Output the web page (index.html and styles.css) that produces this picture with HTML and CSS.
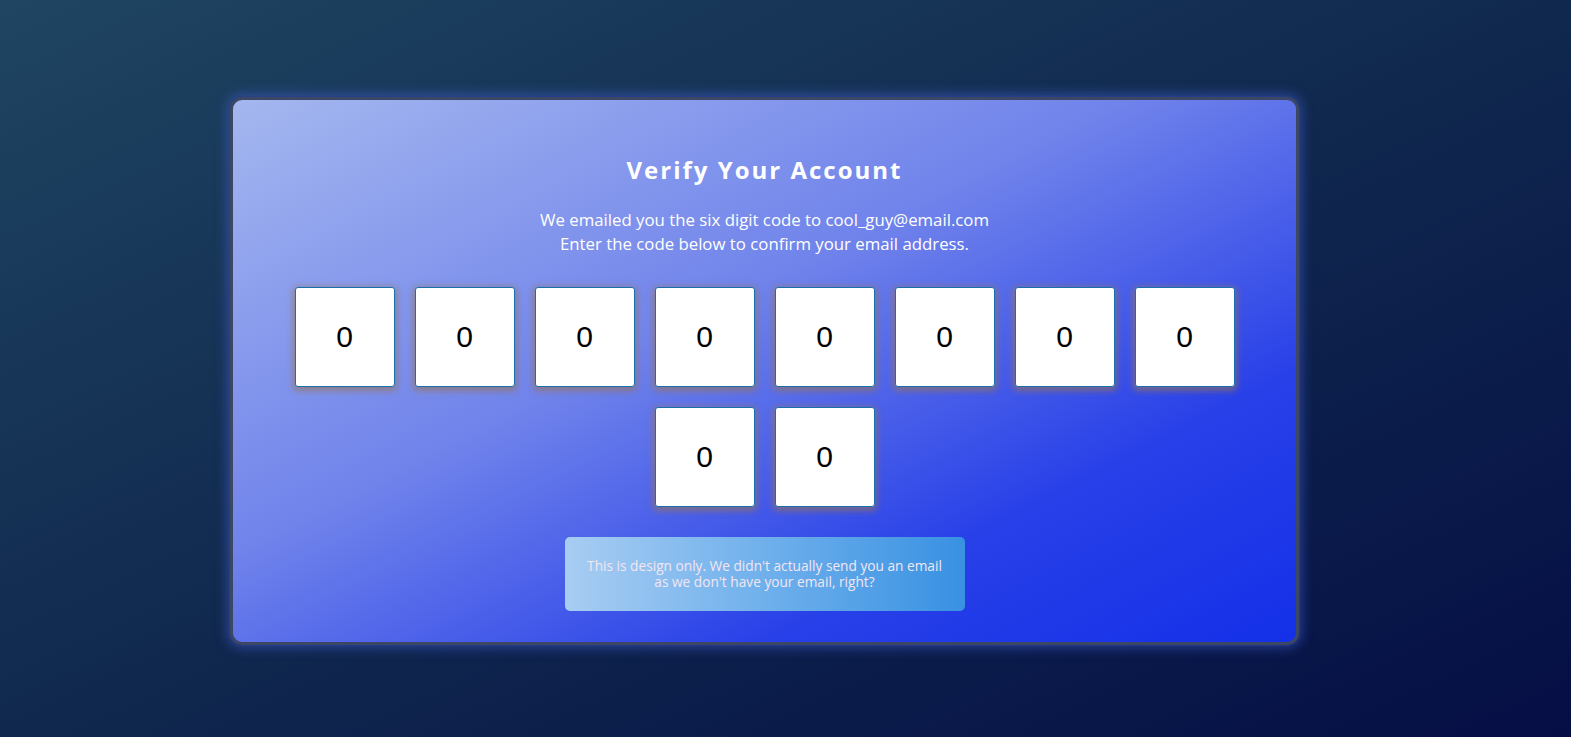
FILE: index.html
```html
<!DOCTYPE html>
<html lang="en">
<head>
<meta charset="utf-8">
<title>Verify Your Account</title>
<link rel="stylesheet" href="styles.css">
</head>
<body>
<div class="page">
  <div class="card">
    <h1 class="title">Verify Your Account</h1>
    <p class="subtitle">We emailed you the six digit code to cool_guy@email.com<br>Enter the code below to confirm your email address.</p>
    <div class="codes">
      <input class="digit" type="text" value="0" maxlength="1">
      <input class="digit" type="text" value="0" maxlength="1">
      <input class="digit" type="text" value="0" maxlength="1">
      <input class="digit" type="text" value="0" maxlength="1">
      <input class="digit" type="text" value="0" maxlength="1">
      <input class="digit" type="text" value="0" maxlength="1">
      <input class="digit" type="text" value="0" maxlength="1">
      <input class="digit" type="text" value="0" maxlength="1">
      <input class="digit" type="text" value="0" maxlength="1">
      <input class="digit" type="text" value="0" maxlength="1">
    </div>
    <div class="note">This is design only. We didn't actually send you an email<br>as we don't have your email, right?</div>
  </div>
</div>
</body>
</html>
```

FILE: styles.css
```css
html, body {
  margin: 0;
  padding: 0;
  height: 100%;
}
body {
  background: linear-gradient(to bottom right, #1f4562 0%, #10284e 50%, #050e45 100%);
  font-family: "Open Sans", "Noto Sans", sans-serif;
  overflow: hidden;
}
.page {
  padding: 97px 0 0 230px;
}
.card {
  box-sizing: border-box;
  width: 1069px;
  height: 548px;
  border: 3px solid #3b4765;
  border-radius: 12px;
  background: linear-gradient(to bottom right, #a4b7ef 0%, #7083eb 42%, #2840e8 75%, #1430e8 100%);
  box-shadow: 0 0 0 1px rgba(40, 60, 140, 0.6), 0 0 12px 3px rgba(70, 100, 220, 0.5);
  display: flex;
  flex-direction: column;
  align-items: center;
  padding: 54px 0 0;
  color: #ffffff;
}
.title {
  margin: 0;
  font-size: 24px;
  line-height: 32px;
  font-weight: 700;
  letter-spacing: 2px;
}
.subtitle {
  margin: 22px 0 0;
  font-size: 16.8px;
  line-height: 24px;
  text-align: center;
}
.codes {
  width: 960px;
  margin-top: 31px;
  display: flex;
  flex-wrap: wrap;
  justify-content: center;
  gap: 20px;
}
.digit {
  box-sizing: border-box;
  width: 100px;
  height: 100px;
  margin: 0;
  padding: 0;
  border: 1px solid #1670b0;
  border-radius: 3px;
  background: #ffffff;
  box-shadow: 0 2px 6px 2px rgba(150, 115, 85, 0.65);
  font-family: "Liberation Sans", Arial, sans-serif;
  font-size: 30px;
  color: #000000;
  text-align: center;
  outline: none;
}
.note {
  box-sizing: border-box;
  width: 400px;
  height: 74px;
  margin-top: 30px;
  border-radius: 5px;
  background: linear-gradient(to right, #a8cdf2 0%, #6fb0ec 50%, #3891e2 100%);
  color: #f3e6f3;
  font-size: 13.7px;
  line-height: 16px;
  text-align: center;
  display: flex;
  align-items: center;
  justify-content: center;
}
```
